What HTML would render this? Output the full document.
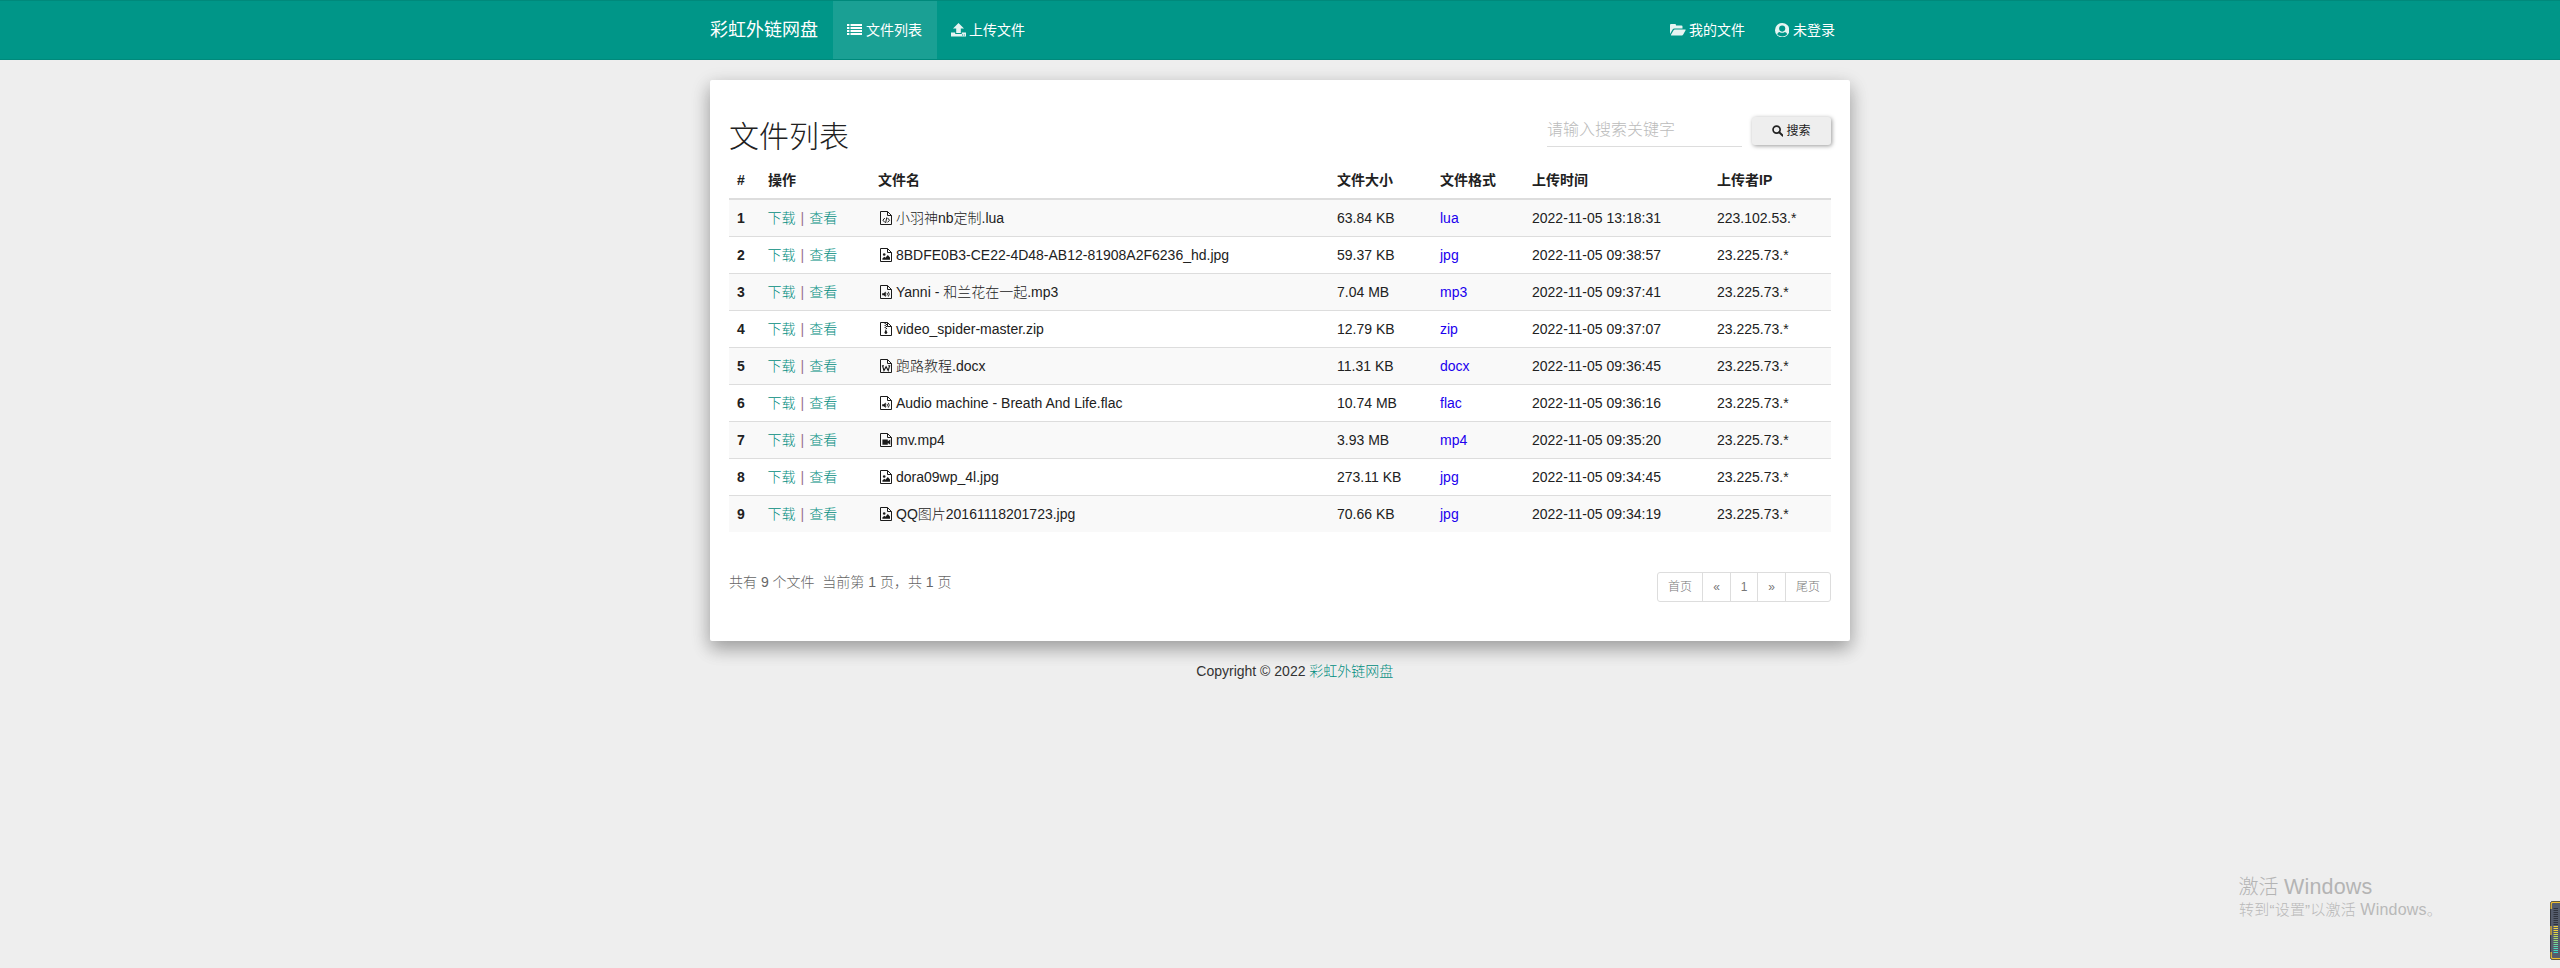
<!DOCTYPE html>
<html lang="zh-cn">
<head>
<meta charset="utf-8">
<title>彩虹外链网盘</title>
<style>
*{box-sizing:border-box}
html,body{margin:0;padding:0}
body{width:2560px;height:968px;overflow:hidden;background:#eee;color:#212121;
 font-family:"Liberation Sans","Noto Sans CJK SC",sans-serif;font-size:14px;line-height:20px;position:relative;font-weight:300}
a{text-decoration:none;color:#009688}
.cjk{font-weight:300}
/* navbar */
.navbar{position:absolute;left:0;top:0;width:2560px;height:60px;background:#009688;border-top:1px solid #00897b;border-bottom:1px solid #00897b}
.navbar .brand{position:absolute;left:710px;top:0;height:58px;line-height:59px;font-size:18px;color:#fff;font-weight:400}
.navbar .item{position:absolute;top:0;height:58px;line-height:58px;color:#fff;font-size:14px;font-weight:400;white-space:nowrap}
.navbar .item.active{background:#1aa094}
.navbar .item svg{position:absolute}
/* panel */
.panel{position:absolute;left:710px;top:80px;width:1140px;height:561px;background:#fff;border-radius:2px;
 box-shadow:0 6px 20px rgba(0,0,0,.19),0 8px 17px rgba(0,0,0,.2)}
h2{position:absolute;left:19px;top:36px;margin:0;font-size:30px;line-height:42px;font-weight:300;color:#212121}
.search{position:absolute;left:837px;top:37px;width:195px;height:30px;border-bottom:1px solid #ddd;color:#bbb;font-size:16px;line-height:26px;font-weight:300}
.btn{position:absolute;left:1042px;top:37px;width:79px;height:28px;background:#eee;border-radius:3px;box-shadow:1px 1px 4px rgba(0,0,0,.4);
 font-size:12px;line-height:28px;color:#222;font-weight:400}
table{position:absolute;left:19px;top:82px;width:1102px;border-collapse:separate;border-spacing:0;table-layout:fixed}
th,td{padding:0 0 0 8px;text-align:left;white-space:nowrap;overflow:visible}
th{height:38px;font-size:14px;font-weight:700;border-bottom:2px solid #ddd;color:#212121}
td{height:37px;border-top:1px solid #ddd;font-size:14px}
tbody tr:first-child td{border-top:0;height:36px}
tbody tr:nth-child(odd) td{background:#f9f9f9}
td.n{font-weight:700}
td.op{color:#9a7090;padding-left:7.5px}
td.op i{font-style:normal;margin:0 1.2px}
td.op a{font-weight:300;color:#008d80}
td.f a{color:#2000ee}
td.nm{padding-left:26px;position:relative}
td.nm svg{position:absolute;left:10px;top:11px}
.info{position:absolute;left:19px;top:492px;font-size:14px;color:#666;font-weight:300;white-space:nowrap}
.pager{position:absolute;left:947px;top:492px;height:30px;display:flex;border:1px solid #ddd;border-radius:3px;background:#fff}
.pager span{display:block;height:28px;line-height:28px;font-size:12px;color:#777;text-align:center;border-left:1px solid #ddd;font-weight:300}
.pager span:first-child{border-left:0}
.copy{position:absolute;left:0;width:2560px;top:661px;text-align:left;font-size:14px;color:#333}
.wm1{position:absolute;left:2238.5px;top:873px;font-size:20px;line-height:28px;color:#b4b4b4;font-weight:300;white-space:nowrap;font-family:"Liberation Sans","Noto Sans CJK SC",sans-serif}
.wm2{position:absolute;left:2239px;top:899.5px;font-size:15px;letter-spacing:.22px;line-height:20px;color:#b9b9b9;font-weight:300;white-space:nowrap}
</style>
</head>
<body>
<svg width="0" height="0" style="position:absolute">
<defs>
<symbol id="fo" viewBox="0 0 12 14"><path d="M0.5 0.5H7.5L11.5 4.5V13.5H0.5Z M7.5 0.5V4.5H11.5" fill="none" stroke="#1a1a1a" stroke-width="1"/></symbol>
<symbol id="i-code" viewBox="0 0 12 14"><use href="#fo"/><path d="M4.8 7L2.9 9.2L4.8 11.4M7.6 7L9.5 9.2L7.6 11.4M6.8 6.4L5.6 12" fill="none" stroke="#1a1a1a" stroke-width="1"/></symbol>
<symbol id="i-img" viewBox="0 0 12 14"><use href="#fo"/><circle cx="4.2" cy="6.5" r="1.3" fill="#1a1a1a"/><path d="M2.4 11.8V10.4L4.3 8.8L5.4 9.8L7.8 7L10 9.6V11.8Z" fill="#1a1a1a"/></symbol>
<symbol id="i-aud" viewBox="0 0 12 14"><use href="#fo"/><path d="M2.2 8.2H3.7L5.8 6.4V12L3.7 10.2H2.2Z" fill="#1a1a1a"/><path d="M7 7.9Q8 9.2 7 10.5M8.3 6.8Q10.2 9.2 8.3 11.6" fill="none" stroke="#1a1a1a" stroke-width="0.95"/></symbol>
<symbol id="i-zip" viewBox="0 0 12 14"><use href="#fo"/><path d="M4.6 1h1.2v1H4.6zM5.8 2H7v1H5.8zM4.6 3h1.2v1H4.6zM5.8 4H7v1H5.8zM4.6 5h1.2v1H4.6zM5.8 6H7v1H5.8z" fill="#1a1a1a"/><path d="M5.8 7L7.3 10.6Q7.3 12 5.9 12Q4.5 12 4.5 10.6Z" fill="#1a1a1a"/></symbol>
<symbol id="i-doc" viewBox="0 0 12 14"><use href="#fo"/><path d="M2.6 6.8L4 11.6L6.1 7.8L8.2 11.6L9.6 6.8M1.9 6.7H4M8.2 6.7H10.3" fill="none" stroke="#1a1a1a" stroke-width="1.15"/></symbol>
<symbol id="i-vid" viewBox="0 0 12 14"><use href="#fo"/><path d="M2.4 6.4H7.8V8.2L10.3 6.4V11.8L7.8 10V11.8H2.4Z" fill="#1a1a1a"/></symbol>
</defs></svg>
<div class="navbar">
  <div class="brand">彩虹外链网盘</div>
  <div class="item active" style="left:833px;width:104px"><svg style="left:13.5px;top:23px" width="15.5" height="11" viewBox="0 0 15 11" preserveAspectRatio="none" fill="#fff"><path d="M0 0h2.3v2H0zM3.4 0H15v2H3.4zM0 3h2.3v2H0zM3.4 3H15v2H3.4zM0 6h2.3v2H0zM3.4 6H15v2H3.4zM0 9h2.3v2H0zM3.4 9H15v2H3.4z"/></svg><span style="position:absolute;left:33px">文件列表</span></div>
  <div class="item" style="left:937px;width:104px"><svg style="left:14px;top:22px" width="15" height="14" viewBox="0 0 15 14" fill="#e6f4f2"><path d="M7.5 0L13 5.5H9.8V10H5.2V5.5H2Z"/><path d="M0 9.5H4.2V11H10.8V9.5H15V13.4H0Z M11 11.4h1v1h-1z M12.8 11.4h1v1h-1z" fill-rule="evenodd"/></svg><span style="position:absolute;left:32px">上传文件</span></div>
  <div class="item" style="left:1655px;width:105px"><svg style="left:15px;top:23px" width="16" height="12" viewBox="0 0 16 12" fill="#e6f4f2"><path d="M0 1Q0 0 1 0H5Q6 0 6 1V1.5H11.5Q12.5 1.5 12.5 2.5V4.5H4.5Q3.2 4.5 2.6 5.6L0 10Z"/><path d="M3.6 6.2Q4 5.5 4.8 5.5H15.3Q16 5.5 15.6 6.2L13.2 10.6Q12.7 11.5 11.8 11.5H1.4Q0.6 11.5 1 10.8Z"/></svg><span style="position:absolute;left:34px">我的文件</span></div>
  <div class="item" style="left:1760px;width:90px"><svg style="left:14.5px;top:22px" width="14.4" height="14.4" viewBox="0 0 16 16"><circle cx="8" cy="8" r="8" fill="#e6f4f2"/><circle cx="8" cy="6.2" r="3.4" fill="#009688"/><path d="M2.4 12.4Q3 10.2 5 9.9Q8 12 11 9.9Q13 10.2 13.6 12.4Q11.4 14.9 8 14.9Q4.6 14.9 2.4 12.4Z" fill="#009688"/></svg><span style="position:absolute;left:33px">未登录</span></div>
</div>

<div class="panel">
  <h2>文件列表</h2>
  <div class="search"><span style="position:absolute;left:0;top:-0.5px">请输入搜索关键字</span></div>
  <div class="btn"><svg style="position:absolute;left:19.8px;top:8.3px" width="11.5" height="11.5" viewBox="0 0 11 11"><circle cx="4.4" cy="4.4" r="3.4" fill="none" stroke="#222" stroke-width="1.6"/><path d="M6.9 6.9L10.2 10.2" stroke="#222" stroke-width="1.9" stroke-linecap="round"/></svg><span style="position:absolute;left:34.5px;top:0;font-weight:400">搜索</span></div>
  <table>
    <colgroup><col style="width:31px"><col style="width:110px"><col style="width:459px"><col style="width:103px"><col style="width:92px"><col style="width:185px"><col style="width:122px"></colgroup>
    <thead><tr><th>#</th><th>操作</th><th>文件名</th><th>文件大小</th><th>文件格式</th><th>上传时间</th><th>上传者IP</th></tr></thead>
    <tbody>
    <tr><td class="n">1</td><td class="op"><a>下载</a> <i>|</i> <a>查看</a></td><td class="nm"><svg width="12" height="14"><use href="#i-code"/></svg>小羽神nb定制.lua</td><td>63.84 KB</td><td class="f"><a>lua</a></td><td>2022-11-05 13:18:31</td><td>223.102.53.*</td></tr>
    <tr><td class="n">2</td><td class="op"><a>下载</a> <i>|</i> <a>查看</a></td><td class="nm"><svg width="12" height="14"><use href="#i-img"/></svg>8BDFE0B3-CE22-4D48-AB12-81908A2F6236_hd.jpg</td><td>59.37 KB</td><td class="f"><a>jpg</a></td><td>2022-11-05 09:38:57</td><td>23.225.73.*</td></tr>
    <tr><td class="n">3</td><td class="op"><a>下载</a> <i>|</i> <a>查看</a></td><td class="nm"><svg width="12" height="14"><use href="#i-aud"/></svg>Yanni - 和兰花在一起.mp3</td><td>7.04 MB</td><td class="f"><a>mp3</a></td><td>2022-11-05 09:37:41</td><td>23.225.73.*</td></tr>
    <tr><td class="n">4</td><td class="op"><a>下载</a> <i>|</i> <a>查看</a></td><td class="nm"><svg width="12" height="14"><use href="#i-zip"/></svg>video_spider-master.zip</td><td>12.79 KB</td><td class="f"><a>zip</a></td><td>2022-11-05 09:37:07</td><td>23.225.73.*</td></tr>
    <tr><td class="n">5</td><td class="op"><a>下载</a> <i>|</i> <a>查看</a></td><td class="nm"><svg width="12" height="14"><use href="#i-doc"/></svg>跑路教程.docx</td><td>11.31 KB</td><td class="f"><a>docx</a></td><td>2022-11-05 09:36:45</td><td>23.225.73.*</td></tr>
    <tr><td class="n">6</td><td class="op"><a>下载</a> <i>|</i> <a>查看</a></td><td class="nm"><svg width="12" height="14"><use href="#i-aud"/></svg>Audio machine - Breath And Life.flac</td><td>10.74 MB</td><td class="f"><a>flac</a></td><td>2022-11-05 09:36:16</td><td>23.225.73.*</td></tr>
    <tr><td class="n">7</td><td class="op"><a>下载</a> <i>|</i> <a>查看</a></td><td class="nm"><svg width="12" height="14"><use href="#i-vid"/></svg>mv.mp4</td><td>3.93 MB</td><td class="f"><a>mp4</a></td><td>2022-11-05 09:35:20</td><td>23.225.73.*</td></tr>
    <tr><td class="n">8</td><td class="op"><a>下载</a> <i>|</i> <a>查看</a></td><td class="nm"><svg width="12" height="14"><use href="#i-img"/></svg>dora09wp_4l.jpg</td><td>273.11 KB</td><td class="f"><a>jpg</a></td><td>2022-11-05 09:34:45</td><td>23.225.73.*</td></tr>
    <tr><td class="n">9</td><td class="op"><a>下载</a> <i>|</i> <a>查看</a></td><td class="nm"><svg width="12" height="14"><use href="#i-img"/></svg>QQ图片20161118201723.jpg</td><td>70.66 KB</td><td class="f"><a>jpg</a></td><td>2022-11-05 09:34:19</td><td>23.225.73.*</td></tr>
    </tbody>
  </table>
  <div class="info">共有 9 个文件&nbsp; 当前第 1 页，共 1 页</div>
  <div class="pager"><span style="width:44px">首页</span><span style="width:28px">«</span><span style="width:27px">1</span><span style="width:28px">»</span><span style="width:45px">尾页</span></div>
</div>

<div class="copy"><span style="position:absolute;left:1196.3px;white-space:nowrap">Copyright © 2022 <a style="font-weight:300;color:#008d80">彩虹外链网盘</a></span></div>

<svg style="position:absolute;left:2550px;top:901px" width="10" height="59" viewBox="0 0 10 59"><path d="M2.5 0.5H12V58.5H2.5Q0.5 58.5 0.5 56.5V2.5Q0.5 0.5 2.5 0.5Z" fill="#555c6c" stroke="#33363e" stroke-width="1"/><path d="M1.2 8V3.2Q1.2 1.4 3 1.4H10M1.2 51V55.8Q1.2 57.6 3 57.6H10M1 25V34" fill="none" stroke="#f0bf30" stroke-width="1.2"/><rect x="3.5" y="7" width="4.5" height="1" fill="#30343e"/><rect x="3.5" y="9" width="4.5" height="1" fill="#30343e"/><rect x="3.5" y="11" width="4.5" height="1" fill="#30343e"/><rect x="3.5" y="13" width="4.5" height="1" fill="#30343e"/><rect x="3.5" y="15" width="4.5" height="1" fill="#30343e"/><rect x="3.5" y="17" width="4.5" height="1" fill="#30343e"/><rect x="3.5" y="19" width="4.5" height="1" fill="#30343e"/><rect x="3.5" y="21" width="4.5" height="1" fill="#30343e"/><rect x="3.5" y="23" width="4.5" height="1" fill="#30343e"/><rect x="3.5" y="25" width="4.5" height="1" fill="#f2d23c"/><rect x="3.5" y="27" width="4.5" height="1" fill="#f2d23c"/><rect x="3.5" y="29" width="4.5" height="1" fill="#f2d23c"/><rect x="3.5" y="31" width="4.5" height="1" fill="#e6d640"/><rect x="3.5" y="33" width="4.5" height="1" fill="#d2d84a"/><rect x="3.5" y="35" width="4.5" height="1" fill="#bcd858"/><rect x="3.5" y="37" width="4.5" height="1" fill="#a6d866"/><rect x="3.5" y="39" width="4.5" height="1" fill="#92d878"/><rect x="3.5" y="41" width="4.5" height="1" fill="#80d88a"/><rect x="3.5" y="43" width="4.5" height="1" fill="#6ed89c"/><rect x="3.5" y="45" width="4.5" height="1" fill="#5cd8ac"/><rect x="3.5" y="47" width="4.5" height="1" fill="#4cd8b8"/><rect x="3.5" y="49" width="4.5" height="1" fill="#40d8c2"/><rect x="3.5" y="51" width="4.5" height="1" fill="#38d8c8"/></svg>
<div class="wm1">激活 <span style="font-size:21.5px;letter-spacing:.15px">Windows</span></div>
<div class="wm2">转到“设置”以激活 <span style="font-size:16px">Windows</span>。</div>
</body>
</html>
